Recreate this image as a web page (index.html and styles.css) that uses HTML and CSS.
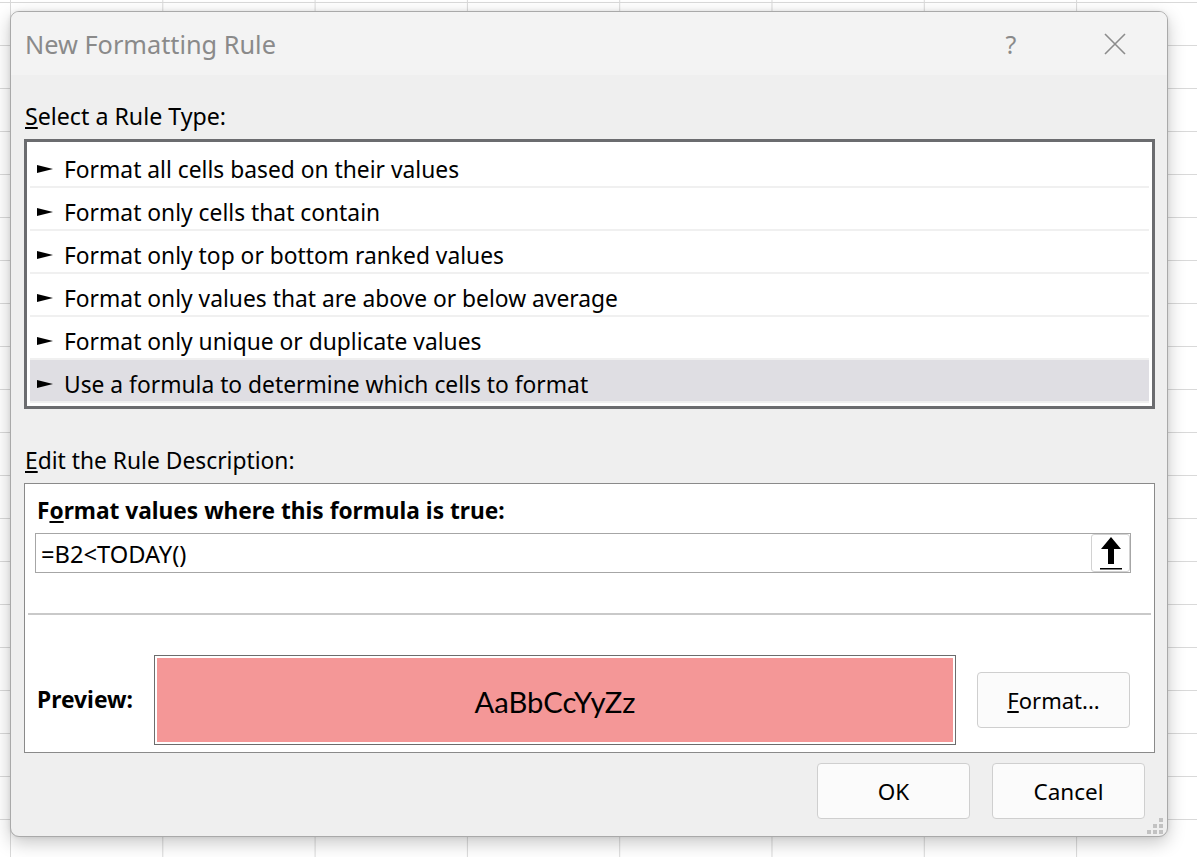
FILE: index.html
```html
<!DOCTYPE html>
<html lang="en">
<head>
<meta charset="utf-8">
<title>New Formatting Rule</title>
<link rel="stylesheet" href="styles.css">
</head>
<body>
<div class="dialog">
  <div class="titlebar">
    <div class="title">New Formatting Rule</div>
    <div class="help">?</div>
    <div class="close">
      <svg width="22" height="22" viewBox="0 0 22 22"><path d="M1 1 L21 21 M21 1 L1 21" stroke="#8c8c8c" stroke-width="1.6" fill="none"/></svg>
    </div>
  </div>
  <div class="content">
    <div class="label"><u>S</u>elect a Rule Type:</div>
    <div class="rulelist">
      <div class="rule"><svg class="tri" width="16" height="8" viewBox="0 0 16 8"><polygon points="0,0 16,4 0,8" fill="#000"/></svg><span>Format all cells based on their values</span></div>
      <div class="rule"><svg class="tri" width="16" height="8" viewBox="0 0 16 8"><polygon points="0,0 16,4 0,8" fill="#000"/></svg><span>Format only cells that contain</span></div>
      <div class="rule"><svg class="tri" width="16" height="8" viewBox="0 0 16 8"><polygon points="0,0 16,4 0,8" fill="#000"/></svg><span>Format only top or bottom ranked values</span></div>
      <div class="rule"><svg class="tri" width="16" height="8" viewBox="0 0 16 8"><polygon points="0,0 16,4 0,8" fill="#000"/></svg><span>Format only values that are above or below average</span></div>
      <div class="rule"><svg class="tri" width="16" height="8" viewBox="0 0 16 8"><polygon points="0,0 16,4 0,8" fill="#000"/></svg><span>Format only unique or duplicate values</span></div>
      <div class="rule selected"><svg class="tri" width="16" height="8" viewBox="0 0 16 8"><polygon points="0,0 16,4 0,8" fill="#000"/></svg><span>Use a formula to determine which cells to format</span></div>
    </div>
    <div class="label label-edit"><u>E</u>dit the Rule Description:</div>
    <div class="descbox">
      <div class="boldlabel">F<u>o</u>rmat values where this formula is true:</div>
      <div class="formula">
        <span class="formula-text">=B2&lt;TODAY()</span>
        <div class="refbtn">
          <svg width="24" height="34" viewBox="0 0 24 34"><polygon points="12,1 22,13 15,13 15,28 9,28 9,13 2,13" fill="#000"/><rect x="1" y="32" width="22" height="1.5" fill="#000"/></svg>
        </div>
      </div>
      <div class="sep"></div>
      <div class="preview-row">
        <div class="boldlabel preview-label">Preview:</div>
        <div class="preview"><div class="preview-fill">AaBbCcYyZz</div></div>
        <div class="btn format-btn"><u>F</u>ormat...</div>
      </div>
    </div>
    <div class="buttons">
      <div class="btn">OK</div>
      <div class="btn">Cancel</div>
    </div>
  </div>
  <div class="grip">
    <i class="d1"></i><i class="d2"></i><i class="d3"></i><i class="d4"></i><i class="d5"></i><i class="d6"></i>
  </div>
</div>
</body>
</html>
```

FILE: styles.css
```css
* { box-sizing: border-box; }
html, body { margin: 0; height: 100%; }
body {
  background-color: #ffffff;
  background-image:
    linear-gradient(to right, #d9d9d9 1px, transparent 1px),
    linear-gradient(to bottom, #d9d9d9 1px, transparent 1px);
  background-size: 152.3px 43px, 152.3px 43px;
  background-position: 10px 2px, 10px 2px;
  padding: 11px 0 0 10px;
  font-family: "Noto Sans", "Open Sans", sans-serif;
  color: #000;
  overflow: hidden;
}
.dialog {
  position: relative;
  width: 1158px;
  height: 826px;
  border: 1px solid #a9a9a9;
  border-radius: 9px;
  background: #efefef;
  box-shadow: 0 6px 18px rgba(0,0,0,0.22), 0 0 4px rgba(0,0,0,0.08);
  display: flex;
  flex-direction: column;
  overflow: hidden;
}
.titlebar {
  height: 63px;
  background: #f3f3f3;
  display: flex;
  align-items: center;
  padding-left: 14px;
  flex: none;
}
.title {
  font-size: 25.3px;
  color: #8a8a8a;
  flex: 1;
}
.help {
  width: 40px;
  text-align: center;
  font-size: 25px;
  color: #8a8a8a;
  padding-left: 2px;
}
.close {
  width: 46px;
  margin-left: 62px;
  margin-right: 29px;
  display: flex;
  justify-content: center;
  align-items: center;
}
.content {
  padding: 0 12px 0 13px;
  display: flex;
  flex-direction: column;
}
.label {
  font-size: 23.2px;
  height: 30px;
  line-height: 30px;
  margin-top: 26px;
  padding-left: 1px;
}
.label-edit { margin-top: 37px; font-size: 22.8px; }
.rulelist {
  margin-top: 8px;
  height: 270px;
  border: 3px solid #6b6c6f;
  background: #fff;
  padding: 3px;
}
.rule {
  height: 43px;
  border-bottom: 2px solid #f0f0f0;
  display: flex;
  align-items: center;
  padding-left: 7px;
  padding-top: 8px;
  font-size: 22.8px;
}
.rule.selected { background: #dfdee3; }
.tri { flex: none; margin-right: 11px; margin-top: -2px; }
.descbox {
  margin-top: 7px;
  height: 270px;
  border: 1px solid #8a8a8a;
  background: #fff;
  display: flex;
  flex-direction: column;
}
.boldlabel {
  font-weight: bold;
  font-size: 22.7px;
  height: 30px;
  line-height: 30px;
  margin-top: 12px;
  padding-left: 12px;
}
.formula {
  margin: 7px 0 0 10px;
  width: 1096px;
  height: 40px;
  border: 1px solid #a6a6a6;
  display: flex;
  align-items: center;
  justify-content: space-between;
  padding-left: 5px;
}
.formula-text { font-size: 23.7px; padding-top: 1px; }
.refbtn {
  width: 39px;
  height: 38px;
  border: 1px solid #d2d2d2;
  border-radius: 3px;
  display: flex;
  align-items: center;
  justify-content: center;
  background: #fff;
}
.sep {
  margin: 40px 3px 0 3px;
  height: 2px;
  background: #c9c9c9;
}
.preview-row {
  margin-top: 40px;
  height: 90px;
  display: flex;
  align-items: center;
}
.preview-label {
  margin-top: 0;
  width: 129px;
  flex: none;
  font-size: 22.8px;
}
.preview {
  width: 802px;
  height: 90px;
  border: 1px solid #6c6c6c;
  padding: 2px;
  flex: none;
}
.preview-fill {
  height: 100%;
  background: #f49797;
  display: flex;
  align-items: center;
  justify-content: center;
  font-family: Lato, "Noto Sans", sans-serif;
  font-size: 29.2px;
  padding-top: 2px;
}
.btn {
  width: 153px;
  height: 56px;
  border: 1px solid #cfcfcf;
  border-radius: 4px;
  background: #fbfbfb;
  display: flex;
  align-items: center;
  justify-content: center;
  font-size: 22.5px;
  flex: none;
}
.format-btn { margin-left: 21px; font-size: 22px; }
.buttons {
  margin-top: 10px;
  margin-right: 10px;
  display: flex;
  justify-content: flex-end;
  gap: 22px;
}
.grip {
  position: absolute;
  right: 2px;
  bottom: 2px;
  width: 18px;
  height: 18px;
}
.grip i {
  position: absolute;
  width: 4px;
  height: 4px;
  background: #c2c2c2;
}
.grip .d1 { right: 2px; top: 2px; }
.grip .d2 { right: 2px; top: 8px; }
.grip .d3 { right: 8px; top: 8px; }
.grip .d4 { right: 2px; top: 14px; }
.grip .d5 { right: 8px; top: 14px; }
.grip .d6 { right: 14px; top: 14px; }
```
